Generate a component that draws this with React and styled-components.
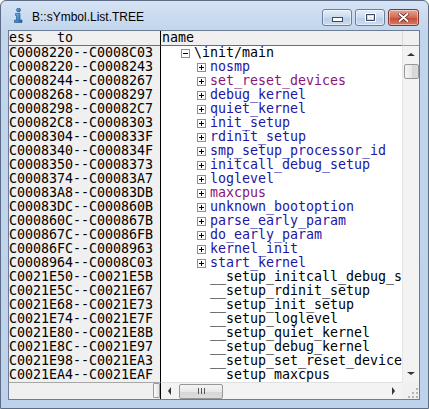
import styled, { createGlobalStyle } from 'styled-components';

const GlobalStyle = createGlobalStyle`
  body {
    margin: 0;
    background: #ffffff;
  }
`

const ranges = [
  "C0008220--C0008C03", "C0008220--C0008243", "C0008244--C0008267", "C0008268--C0008297",
  "C0008298--C00082C7", "C00082C8--C0008303", "C0008304--C000833F", "C0008340--C000834F",
  "C0008350--C0008373", "C0008374--C00083A7", "C00083A8--C00083DB", "C00083DC--C000860B",
  "C000860C--C000867B", "C000867C--C00086FB", "C00086FC--C0008963", "C0008964--C0008C03",
  "C0021E50--C0021E5B", "C0021E5C--C0021E67", "C0021E68--C0021E73", "C0021E74--C0021E7F",
  "C0021E80--C0021E8B", "C0021E8C--C0021E97", "C0021E98--C0021EA3", "C0021EA4--C0021EAF",
];

// kind: module | func | var | plain
const names = [
  { text: "\\init/main", kind: "module" },
  { text: "nosmp", kind: "func" },
  { text: "set_reset_devices", kind: "var" },
  { text: "debug_kernel", kind: "func" },
  { text: "quiet_kernel", kind: "func" },
  { text: "init_setup", kind: "func" },
  { text: "rdinit_setup", kind: "func" },
  { text: "smp_setup_processor_id", kind: "func" },
  { text: "initcall_debug_setup", kind: "func" },
  { text: "loglevel", kind: "func" },
  { text: "maxcpus", kind: "var" },
  { text: "unknown_bootoption", kind: "func" },
  { text: "parse_early_param", kind: "func" },
  { text: "do_early_param", kind: "func" },
  { text: "kernel_init", kind: "func" },
  { text: "start_kernel", kind: "func" },
  { text: "__setup_initcall_debug_setup", kind: "plain" },
  { text: "__setup_rdinit_setup", kind: "plain" },
  { text: "__setup_init_setup", kind: "plain" },
  { text: "__setup_loglevel", kind: "plain" },
  { text: "__setup_quiet_kernel", kind: "plain" },
  { text: "__setup_debug_kernel", kind: "plain" },
  { text: "__setup_set_reset_devices", kind: "plain" },
  { text: "__setup_maxcpus", kind: "plain" },
];

const kindColor = {
  module: "#000000",
  func: "#2414a4",
  var: "#8a1478",
  plain: "#000000",
};

const Window = styled.div`
  width: 429px;
  height: 409px;
  box-sizing: border-box;
  border: 1px solid #5b6c84;
  border-radius: 6px 6px 0 0;
  background: linear-gradient(#d5e3f4, #c1d5ec 30px, #bed3eb);
  display: flex;
  flex-direction: column;
  overflow: hidden;
`

const TitleBar = styled.div`
  height: 29px;
  flex: none;
  display: flex;
  align-items: center;
  padding-left: 12px;
  padding-right: 9px;
`

const TitleText = styled.span`
  font-family: "Liberation Sans", Arial, sans-serif;
  font-size: 12px;
  color: #000;
  margin-left: 8px;
  margin-top: 3px;
  flex: 1;
`

const Caption = styled.div`
  display: flex;
  align-self: flex-start;
  margin-top: 8px;
  gap: 3px;
`

const CapButton = styled.div`
  width: ${p => p.$w}px;
  height: 17px;
  box-sizing: border-box;
  border: 1px solid ${p => p.$close ? "#7e3a2e" : "#6b7f9a"};
  border-radius: 3px;
  background: ${p => p.$close
    ? "linear-gradient(#e6a494, #d06a55 50%, #c34a35 51%, #d77b63)"
    : "linear-gradient(#e3edf8, #c9daee 50%, #b9cde6 51%, #cddcef)"};
  display: flex;
  align-items: center;
  justify-content: center;
  box-shadow: inset 0 0 0 1px rgba(255,255,255,0.45);
`

const MinGlyph = styled.div`
  width: 9px;
  height: 3px;
  background: #fff;
  border: 1px solid #394b64;
  margin-top: 4px;
`

const MaxGlyph = styled.div`
  width: 7px;
  height: 5px;
  border: 1px solid #394b64;
  box-shadow: 0 0 0 1px #fff;
  background: transparent;
  position: relative;
  &::after {
    content: "";
    position: absolute;
    left: 1px; top: 1px; right: 1px; bottom: 1px;
    border: 1px solid #fff;
  }
`

const Client = styled.div`
  margin: 0 8px 0 7px;
  border: 1px solid #6c7c92;
  flex: none;
  display: grid;
  grid-template-columns: 152px 241px 17px;
  grid-template-rows: 15px 336px 17px;
  background: #f0f0f0;
  font-family: "DejaVu Sans Mono", "Liberation Mono", monospace;
  font-size: 13.3px;
`

const HeaderCell = styled.div`
  box-sizing: border-box;
  background: #f0f0f0;
  border-bottom: 1px solid #6e6e6e;
  border-right: ${p => p.$divider ? "1px solid #000" : "none"};
  line-height: 13px;
  white-space: pre;
  overflow: hidden;
  color: #000;
  padding-left: ${p => p.$pad || 0}px;
`

const CornerHead = styled.div`
  box-sizing: border-box;
  background: #f0f0f0;
  border-bottom: 1px solid #9a9a9a;
  border-left: 1px solid #d8d8d8;
`

const AddrColumn = styled.div`
  background: #f0f0f0;
  border-right: 1px solid #000;
  overflow: hidden;
`

const AddrRow = styled.div`
  height: 14px;
  line-height: 14px;
  color: #000;
  white-space: pre;
`

const NameColumn = styled.div`
  background: #fff;
  overflow: hidden;
`

const NameRow = styled.div`
  height: 14px;
  display: flex;
  align-items: center;
  padding-left: ${p => p.$indent}px;
  white-space: pre;
`

const NameText = styled.span`
  line-height: 14px;
  color: ${p => p.$color};
`

const TreeBox = styled.span`
  width: 9px;
  height: 9px;
  box-sizing: border-box;
  border: 1px solid #8f8f8f;
  background: #fff;
  margin-right: ${p => p.$gap}px;
  position: relative;
  flex: none;
  &::before {
    content: "";
    position: absolute;
    left: 1px; top: 3px;
    width: 5px; height: 1px;
    background: #000;
  }
  &::after {
    content: "";
    position: absolute;
    left: 3px; top: 1px;
    width: 1px; height: 5px;
    background: #000;
    display: ${p => p.$open ? "none" : "block"};
  }
`

const Spacer = styled.span`
  width: ${p => p.$w}px;
  flex: none;
`

const VScroll = styled.div`
  background: #f3f3f3;
  border-left: 1px solid #e6e6e6;
  display: flex;
  flex-direction: column;
  align-items: center;
`

const HScroll = styled.div`
  background: #f3f3f3;
  border-top: 1px solid #e0e0e0;
  display: flex;
  align-items: center;
`

const ArrowCell = styled.div`
  width: 17px;
  height: 17px;
  flex: none;
  display: flex;
  align-items: center;
  justify-content: center;
`

const Arrow = styled.div`
  width: 0;
  height: 0;
  border: 3px solid transparent;
  ${p => p.$dir === "up" && "border-bottom: 3px solid #333; border-top-width: 0; border-left-width: 4px; border-right-width: 4px;"}
  ${p => p.$dir === "down" && "border-top: 3px solid #333; border-bottom-width: 0; border-left-width: 4px; border-right-width: 4px;"}
  ${p => p.$dir === "left" && "border-right: 3px solid #333; border-left-width: 0; border-top-width: 4px; border-bottom-width: 4px;"}
  ${p => p.$dir === "right" && "border-left: 3px solid #333; border-right-width: 0; border-top-width: 4px; border-bottom-width: 4px;"}
`

const Thumb = styled.div`
  box-sizing: border-box;
  width: ${p => p.$w}px;
  height: ${p => p.$h}px;
  border: 1px solid #979797;
  border-radius: 2px;
  background: ${p => p.$vertical
    ? "linear-gradient(to right, #f4f4f4, #e8e8e8 50%, #d6d6d6 51%, #dcdcdc)"
    : "linear-gradient(#f4f4f4, #e8e8e8 50%, #d6d6d6 51%, #dcdcdc)"};
  margin: ${p => p.$m};
  display: flex;
  align-items: center;
  justify-content: center;
  gap: 2px;
  flex: none;
`

const GripLine = styled.span`
  width: 1px;
  height: 6px;
  background: #555;
`

const Fill = styled.div`
  flex: 1;
`

const AddrFoot = styled.div`
  background: #f0f0f0;
  border-top: 1px solid #a8a8a8;
  border-right: 1px solid #000;
  display: flex;
  justify-content: flex-end;
`

const MiniThumb = styled.div`
  width: 7px;
  box-sizing: border-box;
  margin: 0 0 1px;
  border: 1px solid #9a9a9a;
  border-radius: 1px;
  background: linear-gradient(to right, #fafafa, #e2e2e2);
`

const SizeGrip = styled.div`
  background: #f0f0f0;
  display: flex;
  align-items: flex-end;
  justify-content: flex-end;
`

const InfoIcon = () => (
  <svg width="11" height="15" viewBox="0 0 11 15">
    <defs>
      <linearGradient id="ig" x1="0" y1="0" x2="1" y2="1">
        <stop offset="0" stopColor="#7ab8ee" />
        <stop offset="1" stopColor="#1c5ea8" />
      </linearGradient>
    </defs>
    <circle cx="5.5" cy="2" r="2" fill="url(#ig)" stroke="#1b4f8c" strokeWidth="0.6" />
    <path d="M2.5 5.5 H7 V12 H9 V14.5 H1.5 V12 H3.5 V7.5 H2.5 Z" fill="url(#ig)" stroke="#1b4f8c" strokeWidth="0.6" />
  </svg>
)

const GripDots = () => (
  <svg width="12" height="12" viewBox="0 0 12 12">
    {[[9, 1], [9, 5], [5, 5], [9, 9], [5, 9], [1, 9]].map(([x, y], i) => (
      <rect key={i} x={x} y={y} width="2" height="2" fill="#b4b4b4" />
    ))}
  </svg>
)

const App = () => {
  return (
    <>
      <GlobalStyle />
      <Window>
        <TitleBar>
          <InfoIcon />
          <TitleText>B::sYmbol.List.TREE</TitleText>
          <Caption>
            <CapButton $w={30}><MinGlyph /></CapButton>
            <CapButton $w={30}><MaxGlyph /></CapButton>
            <CapButton $w={31} $close>
              <svg width="11" height="9" viewBox="0 0 11 9">
                <path d="M1.5 1 L9.5 8 M9.5 1 L1.5 8" stroke="#5a1e14" strokeWidth="3.4" strokeLinecap="round" />
                <path d="M1.5 1 L9.5 8 M9.5 1 L1.5 8" stroke="#fff" strokeWidth="2" strokeLinecap="round" />
              </svg>
            </CapButton>
          </Caption>
        </TitleBar>

        <Client>
          <HeaderCell $divider>{"ess   to"}</HeaderCell>
          <HeaderCell $pad={1}>name</HeaderCell>
          <CornerHead />

          <AddrColumn>
            {ranges.map((r, i) => <AddrRow key={i}>{r}</AddrRow>)}
          </AddrColumn>

          <NameColumn>
            {names.map((n, i) => {
              if (n.kind === "module") {
                return (
                  <NameRow key={i} $indent={20}>
                    <TreeBox $open $gap={4} />
                    <NameText $color={kindColor[n.kind]}>{n.text}</NameText>
                  </NameRow>
                );
              }
              return (
                <NameRow key={i} $indent={36}>
                  {n.kind === "plain" ? <Spacer $w={13} /> : <TreeBox $gap={4} />}
                  <NameText $color={kindColor[n.kind]}>{n.text}</NameText>
                </NameRow>
              );
            })}
          </NameColumn>

          <VScroll>
            <ArrowCell><Arrow $dir="up" /></ArrowCell>
            <Thumb $vertical $w={15} $h={15} $m="1px 0 0" />
            <Fill />
            <ArrowCell><Arrow $dir="down" /></ArrowCell>
          </VScroll>

          <AddrFoot>
            <MiniThumb />
          </AddrFoot>

          <HScroll>
            <ArrowCell><Arrow $dir="left" /></ArrowCell>
            <Thumb $w={44} $h={15} $m="0 0 0 1px">
              <GripLine /><GripLine /><GripLine />
            </Thumb>
            <Fill />
            <ArrowCell><Arrow $dir="right" /></ArrowCell>
          </HScroll>

          <SizeGrip>
            <GripDots />
          </SizeGrip>
        </Client>
      </Window>
    </>
  );
};

export default App;
